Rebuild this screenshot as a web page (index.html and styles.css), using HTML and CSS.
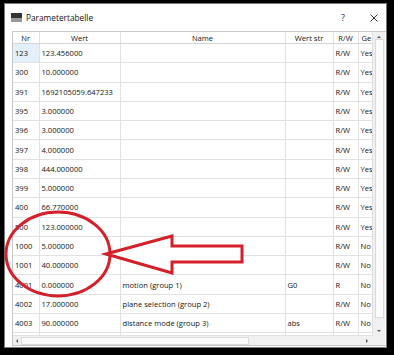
FILE: index.html
```html
<!DOCTYPE html>
<html lang="de">
<head>
  <meta charset="UTF-8" />
  <title>Parametertabelle</title>
  <link rel="stylesheet" href="styles.css">
</head>
<body>
  <div class="window">
    <div class="titlebar">
      <span class="app-icon"><span class="app-icon-top"></span></span>
      <span class="title">Parametertabelle</span>
      <span class="help">?</span>
      <span class="close">
        <svg width="8" height="8" viewBox="0 0 8 8"><path d="M0.5 0.5L7.5 7.5M7.5 0.5L0.5 7.5" stroke="#333" stroke-width="1"/></svg>
      </span>
    </div>

    <div class="frame">
      <div class="viewport">
        <table class="params">
          <colgroup>
            <col class="c-nr"><col class="c-wert"><col class="c-name"><col class="c-str"><col class="c-rw"><col class="c-ge">
          </colgroup>
          <thead>
            <tr><th>Nr</th><th>Wert</th><th>Name</th><th>Wert str</th><th>R/W</th><th>Ge</th></tr>
          </thead>
          <tbody>
            <tr><td class="current">123</td><td>123.456000</td><td></td><td></td><td>R/W</td><td>Yes</td></tr>
            <tr><td>300</td><td>10.000000</td><td></td><td></td><td>R/W</td><td>Yes</td></tr>
            <tr><td>391</td><td>1692105059.647233</td><td></td><td></td><td>R/W</td><td>Yes</td></tr>
            <tr><td>395</td><td>3.000000</td><td></td><td></td><td>R/W</td><td>Yes</td></tr>
            <tr><td>396</td><td>3.000000</td><td></td><td></td><td>R/W</td><td>Yes</td></tr>
            <tr><td>397</td><td>4.000000</td><td></td><td></td><td>R/W</td><td>Yes</td></tr>
            <tr><td>398</td><td>444.000000</td><td></td><td></td><td>R/W</td><td>Yes</td></tr>
            <tr><td>399</td><td>5.000000</td><td></td><td></td><td>R/W</td><td>Yes</td></tr>
            <tr><td>400</td><td>66.770000</td><td></td><td></td><td>R/W</td><td>Yes</td></tr>
            <tr><td>500</td><td>123.000000</td><td></td><td></td><td>R/W</td><td>Yes</td></tr>
            <tr><td>1000</td><td>5.000000</td><td></td><td></td><td>R/W</td><td>No</td></tr>
            <tr><td>1001</td><td>40.000000</td><td></td><td></td><td>R/W</td><td>No</td></tr>
            <tr><td>4001</td><td>0.000000</td><td>motion (group 1)</td><td>G0</td><td>R</td><td>No</td></tr>
            <tr><td>4002</td><td>17.000000</td><td>plane selection (group 2)</td><td></td><td>R/W</td><td>No</td></tr>
            <tr><td>4003</td><td>90.000000</td><td>distance mode (group 3)</td><td>abs</td><td>R/W</td><td>No</td></tr>
            <tr class="empty"><td></td><td></td><td></td><td></td><td></td><td></td></tr>
          </tbody>
        </table>
      </div>

      <div class="vscroll">
        <span class="arrow up"></span>
        <span class="vthumb"></span>
        <span class="arrow down"></span>
      </div>

      <div class="hscroll">
        <span class="arrow left"></span>
        <span class="hthumb"></span>
        <span class="arrow right"></span>
      </div>
      <div class="corner"></div>
    </div>
  </div>

  <!-- red markup drawn over the screenshot -->
  <svg class="markup" width="394" height="355" viewBox="0 0 394 355">
    <ellipse cx="58" cy="254" rx="52" ry="42" fill="none" stroke="#d3202a" stroke-width="3"/>
    <polygon points="106,254 172,236 172,246 242,246 242,262 172,262 172,273" fill="#fff" stroke="#d3202a" stroke-width="3" stroke-linejoin="miter"/>
  </svg>
</body>
</html>
```

FILE: styles.css
```css
body {
  margin: 0;
  background-color: #000;
  font-family: "Open Sans", "Noto Sans", sans-serif;
  font-size: 7.6px;
  color: #161616;
}
.window {
  box-sizing: border-box;
  width: 383px;
  height: 345px;
  margin: 3px 0 0 4px;
  background-color: #fff;
  border: 1px solid #7a7a7a;
}
.titlebar {
  height: 27px;
  display: flex;
  align-items: center;
  padding-left: 6px;
}
.app-icon {
  width: 11px;
  height: 9px;
  background-color: #9a9a9a;
  display: flex;
  flex-direction: column;
  margin-right: 4px;
}
.app-icon-top {
  height: 5px;
  background-color: #333;
}
.title {
  flex: 1;
  font-size: 8.3px;
  color: #111;
}
.help {
  width: 38px;
  text-align: center;
  font-size: 9px;
  color: #333;
}
.close {
  width: 24px;
  display: flex;
  justify-content: center;
}
.frame {
  margin-left: 7px;
  border: 1px solid #c8c8c8;
  border-right: none;
  display: grid;
  grid-template-columns: 359px 13px;
  grid-template-rows: 303px 10px;
}
.viewport {
  overflow: hidden;
}
.params {
  border-collapse: collapse;
  table-layout: fixed;
  width: 400px;
}
.c-nr { width: 26px; }
.c-wert { width: 81px; }
.c-name { width: 165px; }
.c-str { width: 48px; }
.c-rw { width: 25px; }
.c-ge { width: 55px; }
.params th {
  height: 11px;
  padding: 0;
  font-weight: normal;
  text-align: center;
  border-right: 1px solid #e2e2e2;
  border-bottom: 1px solid #d5d5d5;
  white-space: nowrap;
  overflow: hidden;
}
.params th:last-child {
  text-align: left;
  padding-left: 3px;
}
.params td {
  height: 18.29px;
  padding: 0 0 0 2px;
  border-right: 1px solid #e2e2e2;
  border-bottom: 1px solid #e2e2e2;
  white-space: nowrap;
  overflow: hidden;
}
.params td.current {
  background-color: #e3f0fb;
}
.vscroll {
  background-color: #f0f0f0;
  border-left: 1px solid #e0e0e0;
  display: flex;
  flex-direction: column;
  align-items: center;
}
.vthumb {
  width: 9px;
  flex: 1;
  margin: 1px 0 12px;
  background-color: #fbfbfb;
  border: 1px solid #dadada;
  box-sizing: border-box;
}
.hscroll {
  background-color: #f0f0f0;
  border-top: 1px solid #e0e0e0;
  display: flex;
  align-items: center;
}
.hthumb {
  width: 228px;
  height: 8px;
  margin: 0 auto 0 1px;
  background-color: #fafafa;
  border: 1px solid #dadada;
  box-sizing: border-box;
}
.corner {
  background-color: #f0f0f0;
}
.arrow {
  width: 0;
  height: 0;
  border: 2.5px solid transparent;
  flex: none;
}
.arrow.up {
  margin-top: 4px;
  border-bottom-color: #555;
  border-top-width: 0;
}
.arrow.down {
  margin-bottom: 3px;
  border-top-color: #555;
  border-bottom-width: 0;
}
.arrow.left {
  margin: 0 2px 0 3px;
  border-right-color: #555;
  border-left-width: 0;
}
.arrow.right {
  margin: 0 4px 0 2px;
  border-left-color: #555;
  border-right-width: 0;
}
.markup {
  position: absolute;
  top: 0;
  left: 0;
  pointer-events: none;
}
```
